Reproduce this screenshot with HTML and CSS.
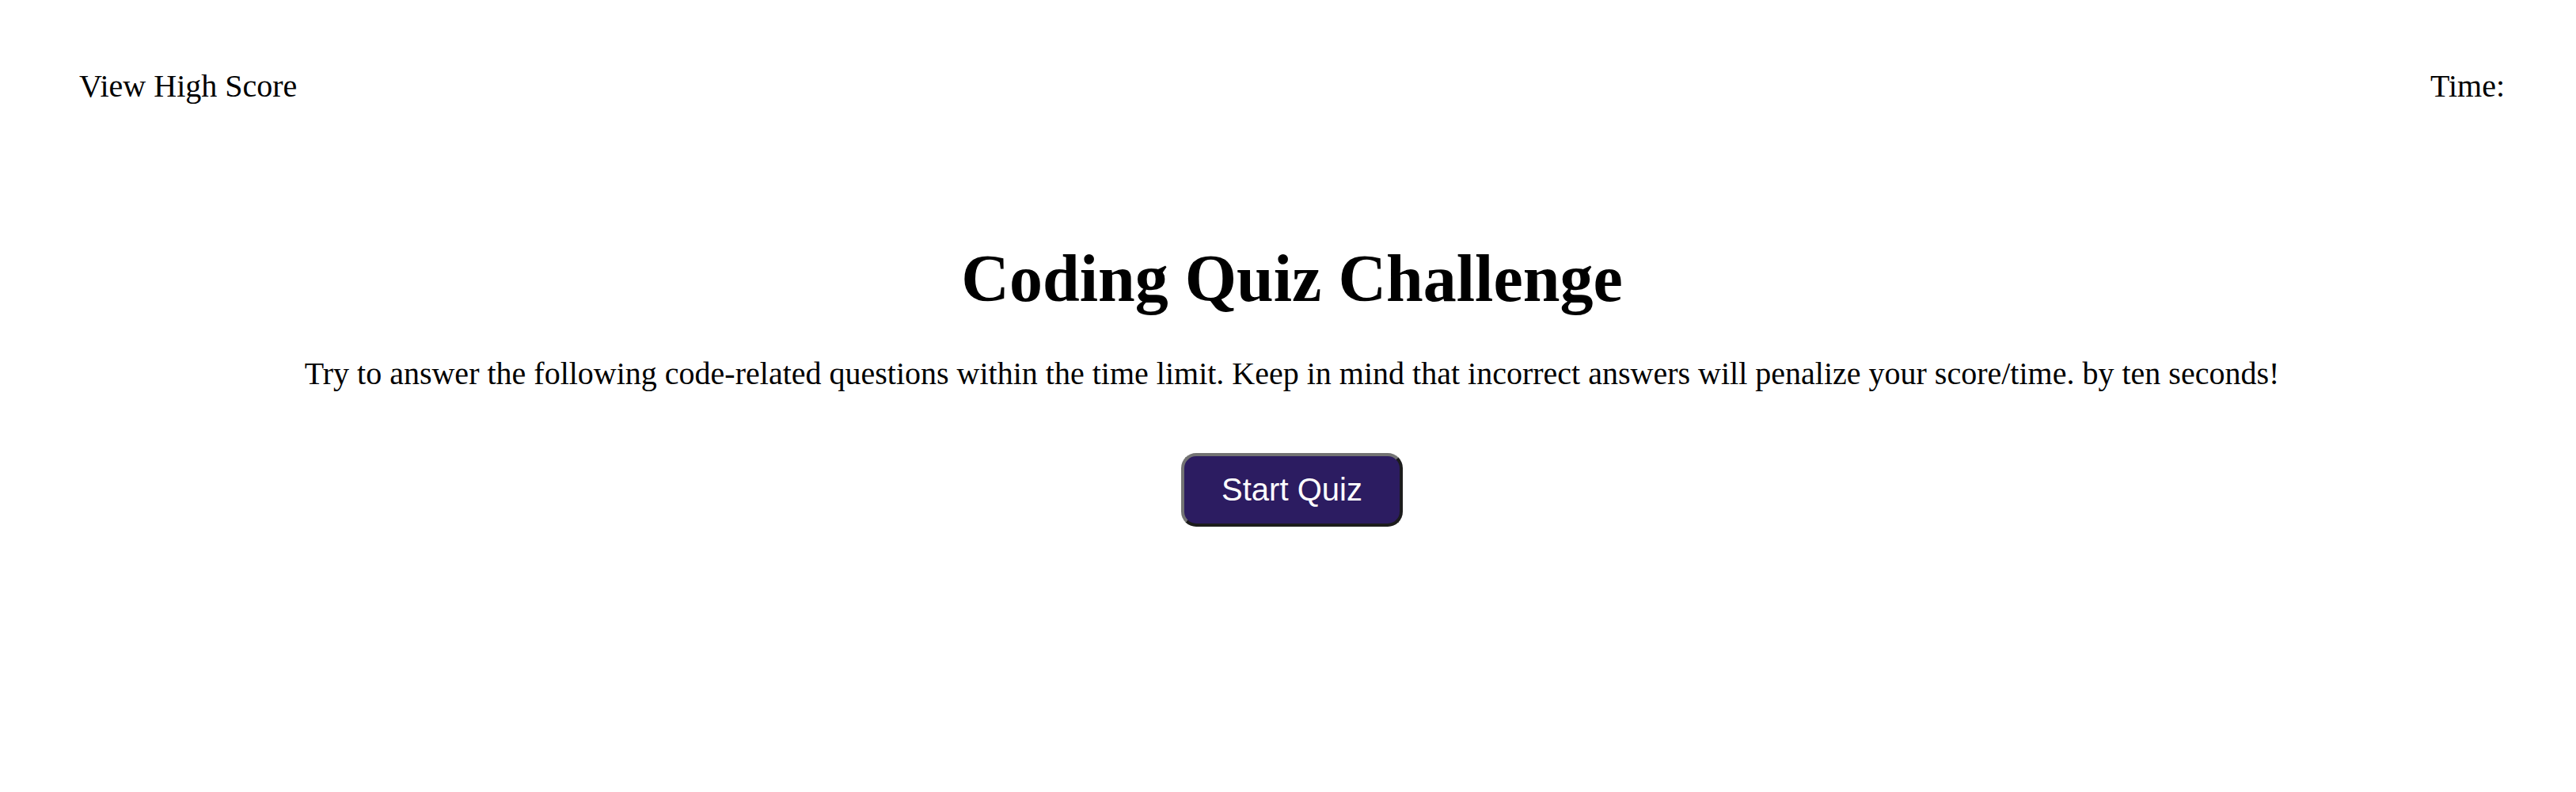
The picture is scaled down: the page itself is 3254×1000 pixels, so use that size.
FILE: index.html
```html
<!DOCTYPE html>
<html lang="en">
<head>
<meta charset="utf-8">
<title>Coding Quiz Challenge</title>
<link rel="stylesheet" href="styles.css">
</head>
<body>
<header class="top-bar">
  <a class="high-score">View High Score</a>
  <div class="timer">Time: <span class="time-left"></span></div>
</header>
<main class="intro">
  <h1 class="title">Coding Quiz Challenge</h1>
  <p class="lead">Try to answer the following code-related questions within the time limit. Keep in mind that incorrect answers will penalize your score/time. by ten seconds!</p>
  <button class="start-btn">Start Quiz</button>
</main>
</body>
</html>
```
FILE: styles.css
```css
html, body {
  margin: 0;
  padding: 0;
  background: #ffffff;
  color: #000000;
}
body {
  font-family: "Liberation Serif", "Times New Roman", serif;
  font-size: 40px;
}
.top-bar {
  display: flex;
  justify-content: space-between;
  align-items: flex-start;
  padding: 85px 90px 0 100px;
}
.high-score {
  color: #000;
  text-decoration: none;
  font-size: 40px;
}
.timer {
  font-size: 40px;
}
.intro {
  display: flex;
  flex-direction: column;
  align-items: center;
  text-align: center;
  padding-left: 10px;
}
.title {
  margin: 173px 0 0;
  font-size: 84px;
  font-weight: bold;
  line-height: 93px;
}
.lead {
  margin: 52px 0 0;
  font-size: 40px;
  line-height: 44px;
}
.start-btn {
  margin-top: 78px;
  font-family: "Liberation Sans", Arial, sans-serif;
  font-size: 40px;
  line-height: 47px;
  color: #ffffff;
  background: #2c1c61;
  border: 4px solid;
  border-color: #737373 #1c1c1c #1c1c1c #737373;
  border-radius: 19px;
  padding: 19px 47px;
  cursor: pointer;
}
```
